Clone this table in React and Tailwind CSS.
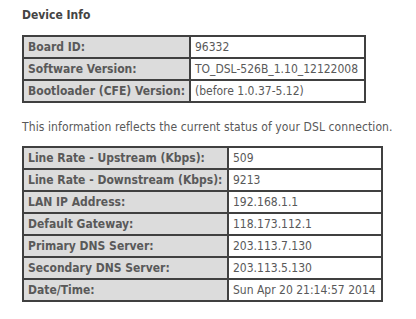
const deviceRows = [
  ['Board ID:', '96332'],
  ['Software Version:', 'TO_DSL-526B_1.10_12122008'],
  ['Bootloader (CFE) Version:', '(before 1.0.37-5.12)'],
];

const lineRows = [
  ['Line Rate - Upstream (Kbps):', '509'],
  ['Line Rate - Downstream (Kbps):', '9213'],
  ['LAN IP Address:', '192.168.1.1'],
  ['Default Gateway:', '118.173.112.1'],
  ['Primary DNS Server:', '203.113.7.130'],
  ['Secondary DNS Server:', '203.113.5.130'],
  ['Date/Time:', 'Sun Apr 20 21:14:57 2014'],
];

const InfoTable = ({ rows, width, labelWidth }) => (
  <table className={`border-collapse border-2 border-[#404040] ${width}`}>
    <tbody>
      {rows.map(([label, value]) => (
        <tr key={label} className="h-[22px]">
          <td className={`${labelWidth} border-2 border-[#404040] bg-[#dcdcdc] px-[4px] py-0 font-bold text-[#595959] whitespace-nowrap`}>
            {label}
          </td>
          <td className="border-2 border-[#404040] bg-white px-[4px] py-0 text-[#595959] whitespace-nowrap">
            {value}
          </td>
        </tr>
      ))}
    </tbody>
  </table>
);

export default function App() {
  return (
    <div className="w-[416px] h-[319px] bg-white pl-[22px] pt-[7px] text-[12px] leading-[16px] font-['DejaVu_Sans_Condensed','DejaVu_Sans',sans-serif]">
      <h1 className="font-bold text-[12px] text-[#444]">Device Info</h1>
      <div className="mt-[12px]">
        <InfoTable rows={deviceRows} width="w-[344px]" labelWidth="w-[163px]" />
      </div>
      <p className="mt-[16px] text-[#595959] tracking-[0.1px]">
        This information reflects the current status of your DSL connection.
      </p>
      <div className="mt-[11px]">
        <InfoTable rows={lineRows} width="w-[361px]" labelWidth="w-[205px]" />
      </div>
    </div>
  );
}
